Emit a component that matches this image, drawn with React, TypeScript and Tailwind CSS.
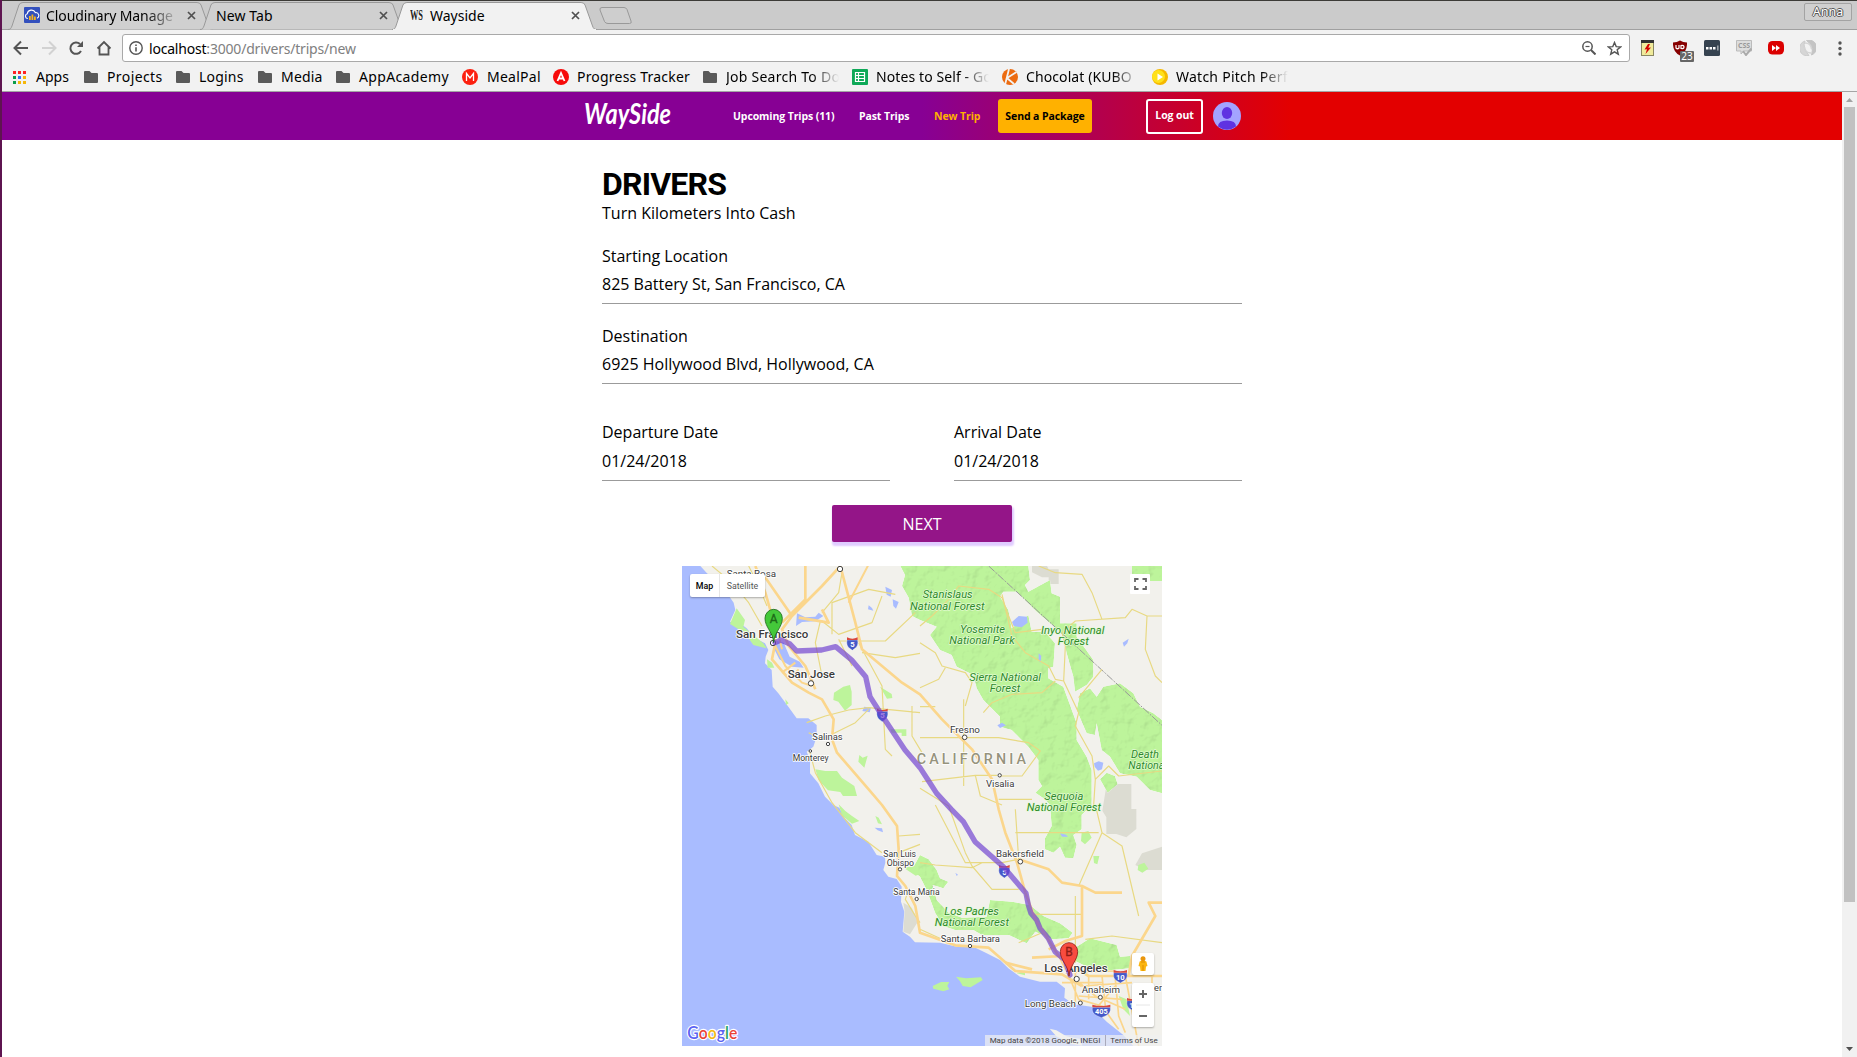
import React from "react";

type Children = { children?: React.ReactNode };

/* ---------- Browser chrome ---------- */

function TabShape({ active }: { active?: boolean }) {
  return (
    <svg className="absolute inset-0 h-full w-full" viewBox="0 0 206 29" preserveAspectRatio="none">
      <path d="M0 28.5 C3 28.5 3 27 4 25 L11 4 Q12 1.5 15 1.5 L190 1.5 Q193 1.5 194 4 L201.500 25 C202.500 27.500 203 28.500 206 28.500" fill={active ? "#f2f2f2" : "#d0d0d0"} stroke="#999" strokeWidth="1" />
      {active && <path d="M1 28.7 H205" stroke="#f2f2f2" strokeWidth="1.4" />}
    </svg>
  );
}

function Tab({ active, wide, children }: Children & { active?: boolean; wide?: boolean }) {
  return (
    <div className={active ? "relative z-10 -mr-[13px] h-[29px] w-[205px] shrink-0" : "relative -mr-[13px] h-[29px] w-[205px] shrink-0"}>
      <TabShape active={active} />
      <div className="relative flex h-full items-center pb-px pl-[16px] pr-[17px]">
        <div className={wide ? "flex min-w-0 flex-1 items-center whitespace-nowrap text-[14px] text-black [mask-image:linear-gradient(to_right,black_76%,transparent_98%)]" : "flex min-w-0 flex-1 items-center whitespace-nowrap text-[14px] text-black"}>
          {children}
        </div>
        <svg className="ml-1 h-[9px] w-[9px] shrink-0" viewBox="0 0 9 9">
          <path d="M1 1 L8 8 M8 1 L1 8" stroke="#505050" strokeWidth="1.7" />
        </svg>
      </div>
    </div>
  );
}

function TabStrip() {
  return (
    <div className="flex h-[30px] border-b border-t border-b-[#a0a0a0] border-t-[#3c3b37] bg-[#cbcbcb] pl-[6px]">
      <Tab wide>
        <svg className="mr-[6px] h-4 w-4 shrink-0" viewBox="0 0 16 16">
          <rect width="16" height="16" rx="1" fill="#3350bd" />
          <path d="M3.800 11.500 H3.500 A2.400 2.400 0 0 1 3.300 6.800 A4.200 4.200 0 0 1 11.300 5.600 A3 3 0 0 1 13 11.300" fill="none" stroke="#fff" strokeWidth="1.100" />
          <path d="M5 9 h1.800 v4 H5z M7.500 7.500 h1.800 V13 H7.500z M10 9.500 h1.800 V13 H10z" fill="#f6b21b" />
        </svg>
        <span className="tracking-[-0.1px]">Cloudinary Manage</span>
      </Tab>
      <Tab>
        <span className="tracking-[0.1px]">New Tab</span>
      </Tab>
      <Tab active>
        <svg className="ml-[2px] mr-[7px] h-[14px] w-[13px] shrink-0" viewBox="0 0 13 14">
          <text x="0" y="12" textLength="13" lengthAdjust="spacingAndGlyphs" fill="#222" className="font-['Liberation_Serif'] text-[14px] font-bold">WS</text>
        </svg>
        <span>Wayside</span>
      </Tab>
      <svg className="ml-[14px] mt-[5px] h-[20px] w-[36px] shrink-0" viewBox="0 0 36 20">
        <path d="M4 1.500 H26 Q28 1.500 29 3.500 L33 15 Q34 17.500 31.500 17.500 H10 Q7.500 17.500 6.500 15.500 L2 4 Q1.500 1.500 4 1.500Z" fill="#cecece" stroke="#999" />
      </svg>
      <div className="ml-auto mr-[5px] mt-[2px] flex h-[18px] w-[48px] items-center justify-center rounded-[2px] border border-[#a3a3a3] bg-[#d0d0d0] text-[12.5px] text-white [text-shadow:1px_0_#555,-1px_0_#555,0_1px_#555,0_-1px_#555]">
        Anna
      </div>
    </div>
  );
}

function Toolbar() {
  return (
    <div className="flex h-[37px] items-center bg-[#f2f2f2] pb-px pl-[9px] pr-[15px]">
      <svg className="h-[18px] w-[108px] shrink-0" viewBox="0 0 108 18" fill="none" stroke="#555" strokeWidth="2">
        <path d="M17 9 H4 M10 2.500 L3.500 9 L10 15.500" />
        <path d="M31 9 H44 M38 2.500 L44.500 9 L38 15.500" stroke="#d2d2d2" />
        <path d="M70 12 A5.700 5.700 0 1 1 69 5" />
        <path d="M72 2 V8 H66z" fill="#555" stroke="none" />
        <path d="M86.500 9.500 L93 3 L99.500 9.500 M88.500 8 V15.500 H97.500 V8" strokeWidth="1.800" />
      </svg>
      <div className="ml-[3px] flex h-[28px] flex-1 items-center rounded-[3px] border border-[#a9a9a9] bg-white pl-[6px] pr-[7px]">
        <svg className="mr-[6px] h-[14px] w-[14px]" viewBox="0 0 14 14" fill="none" stroke="#555" strokeWidth="1.400">
          <circle cx="7" cy="7" r="6.200" />
          <path d="M7 6.200 V10.500 M7 3.500 V5" strokeWidth="1.600" />
        </svg>
        <div className="text-[14px] tracking-[-0.2px] text-black">
          localhost<span className="text-[#808080]">:3000/drivers/trips/new</span>
        </div>
        <svg className="ml-auto h-[14px] w-[14px]" viewBox="0 0 14 14" fill="none" stroke="#555" strokeWidth="1.500">
          <circle cx="5.500" cy="5.500" r="4.700" />
          <path d="M9 9 L13.500 13.500" strokeWidth="2" />
          <path d="M3.500 5.500 H7.500" strokeWidth="1.200" />
        </svg>
        <svg className="ml-[11px] h-[15px] w-[15px]" viewBox="0 0 15 15" fill="none" stroke="#555" strokeWidth="1.400">
          <path d="M7.500 1.500 L9.200 5.600 L13.600 5.900 L10.200 8.800 L11.300 13.200 L7.500 10.800 L3.700 13.200 L4.800 8.800 L1.400 5.900 L5.800 5.600Z" />
        </svg>
      </div>
      <div className="ml-[11px] flex items-center gap-[16px]">
        <svg className="h-4 w-[13px]" viewBox="0 0 13 16">
          <rect x=".5" y=".5" width="12" height="15" fill="#f0eb9b" stroke="#8a8762" />
          <rect width="13" height="3" fill="#333" />
          <path d="M7 4 L3.500 9.500 L6 9.300 L4.500 14 L10 7.500 L7.300 7.800 L9 4Z" fill="#d40000" />
        </svg>
        <div className="relative ml-[3px] h-4 w-[14px]">
          <svg className="h-4 w-[14px]" viewBox="0 0 14 16">
            <path d="M7 .5 Q10 2.500 14 2.500 Q14.500 12 7 15.500 Q-.5 12 0 2.500 Q4 2.500 7 .5Z" fill="#870000" />
            <path d="M3 5 V8 Q4.500 9.500 6 8 V5 M8 9 V5.500 Q11 5 11 7 Q11 9 8 8.500" fill="none" stroke="#fff" strokeWidth="1.200" />
          </svg>
          <div className="absolute left-[7px] top-[11px] flex h-[11px] w-[14px] items-center justify-center rounded-[1px] bg-[#666] text-[10px] text-white">23</div>
        </div>
        <svg className="ml-[1px] h-4 w-4" viewBox="0 0 16 16">
          <rect width="16" height="16" rx="1.500" fill="#364350" />
          <path d="M2 7 h2.500 v2.500 H2z M5.500 7 H8 v2.500 H5.500z M9 7 h2.500 v2.500 H9z M13.500 5.500 h.8 v5 h-.8z" fill="#fff" />
        </svg>
        <div className="relative h-4 w-4">
          <svg className="h-4 w-4" viewBox="0 0 16 16">
            <path d="M.5 .5 H15.500 V11 H8 L5 14 V11 H.5z" fill="#ddd" stroke="#bbb" />
            <path d="M7 11 L10 15 L15.500 8.500" fill="none" stroke="#aaa" strokeWidth="2" />
          </svg>
          <span className="absolute left-[2px] top-0 text-[7px] font-bold leading-[11px] text-[#999]">CSS</span>
        </div>
        <svg className="h-4 w-4" viewBox="0 0 16 16">
          <rect y="1" width="16" height="13.500" rx="4.500" fill="#db0000" />
          <path d="M4 5 L8 8 L4 11z M8 5 L12 8 L8 11z" fill="#fff" />
        </svg>
        <svg className="h-4 w-4" viewBox="0 0 16 16">
          <path d="M9 15.500 A7.500 7.500 0 0 1 5 1 Q2 8 9 15.500Z" fill="#d6d6d6" stroke="#ccc" />
          <path d="M6.500 .5 A7.500 7.500 0 0 1 11.500 15 Q14.500 6 6.500 .5Z" fill="#c4c4c4" stroke="#c4c4c4" />
          <path d="M5 3 Q11 3 11.500 9 M4.500 7 Q5 13 11 13" fill="none" stroke="#d4d4d4" strokeWidth="1.500" />
        </svg>
        <svg className="ml-[6px] h-4 w-[4px]" viewBox="0 0 4 16" fill="#555">
          <circle cx="2" cy="3" r="1.700" />
          <circle cx="2" cy="8.500" r="1.700" />
          <circle cx="2" cy="14" r="1.700" />
        </svg>
      </div>
    </div>
  );
}

function Folder() {
  return (
    <svg className="h-4 w-[14px]" viewBox="0 0 14 16">
      <path d="M0 3 Q0 2 1 2 H5.500 L7.500 4 H13 Q14 4 14 5 V13 Q14 14 13 14 H1 Q0 14 0 13Z" fill="#5a5a5a" />
    </svg>
  );
}

function Bookmark({ icon, width, children }: Children & { icon: React.ReactNode; width: string }) {
  return (
    <div className="mr-[13px] flex shrink-0 items-center gap-[9px]">
      {icon}
      <span className={width}>{children}</span>
    </div>
  );
}

const fade = "[mask-image:linear-gradient(to_right,black_76%,transparent_100%)]";

function BookmarksBar() {
  return (
    <div className="flex h-[25px] items-start overflow-hidden whitespace-nowrap border-b border-[#a5a5a5] bg-[#f2f2f2] pl-[11px] text-[14px] leading-[20px] text-black">
      <Bookmark
        width="w-[35px]"
        icon={
          <svg className="h-[13px] w-[14px]" viewBox="0 0 14 13">
            <path d="M0 0h3v3H0z M5 0h3v3H5z M10 0h3v3h-3z" fill="#f22" />
            <path d="M0 5h3v3H0z M0 10h3v3H0z" fill="#0a9d4a" />
            <path d="M5 5h3v3H5z" fill="#3b6cf0" />
            <path d="M10 5h3v3h-3z M5 10h3v3H5z M10 10h3v3h-3z" fill="#f5b70a" />
          </svg>
        }
      >
        Apps
      </Bookmark>
      <Bookmark icon={<Folder />} width="w-[56px] tracking-[0.4px]">Projects</Bookmark>
      <Bookmark icon={<Folder />} width="w-[46px] tracking-[0.2px]">Logins</Bookmark>
      <Bookmark icon={<Folder />} width="w-[42px] tracking-[0.2px]">Media</Bookmark>
      <Bookmark icon={<Folder />} width="w-[90px] tracking-[0.35px]">AppAcademy</Bookmark>
      <Bookmark
        width="w-[53px] tracking-[0.25px]"
        icon={
          <svg className="h-4 w-4" viewBox="0 0 16 16">
            <circle cx="8" cy="8" r="8" fill="#fc2010" />
            <path d="M4.500 12 V4.500 L8 9 L11.500 4.500 V12" fill="none" stroke="#fff" strokeWidth="1.300" />
          </svg>
        }
      >
        MealPal
      </Bookmark>
      <Bookmark
        width="w-[113px] tracking-[0.2px]"
        icon={
          <svg className="-mr-px h-4 w-4" viewBox="0 0 16 16">
            <circle cx="8" cy="8" r="8" fill="#f70a0a" />
            <path d="M4.500 12 L8 4 L11.500 12 M6 9.500 H10" fill="none" stroke="#fff" strokeWidth="1.800" />
          </svg>
        }
      >
        Progress Tracker
      </Bookmark>
      <Bookmark icon={<Folder />} width={"w-[113px] tracking-[0.25px] " + fade}>Job Search To Do</Bookmark>
      <Bookmark
        width={"w-[113px] tracking-[0.1px] " + fade}
        icon={
          <svg className="-mr-px h-4 w-4" viewBox="0 0 16 16">
            <rect width="16" height="16" rx="1" fill="#0fa958" />
            <path d="M3.500 3.500 h9 v9 h-9z M3.500 6.500 h9 M3.500 9.500 h9 M6.500 3.500 v9" fill="none" stroke="#fff" strokeWidth="1.200" />
          </svg>
        }
      >
        Notes to Self - Go
      </Bookmark>
      <Bookmark
        width={"w-[113px] tracking-[0.1px] " + fade}
        icon={
          <svg className="-mr-px h-4 w-4" viewBox="0 0 16 16">
            <circle cx="8" cy="8" r="8" fill="#ec6b10" />
            <path d="M7 0 L3 16 M14.500 3 L5 9 L12 15" fill="none" stroke="#f2f2f2" strokeWidth="1.800" />
          </svg>
        }
      >
        Chocolat (KUBO
      </Bookmark>
      <Bookmark
        width={"w-[112px] tracking-[0.25px] " + fade}
        icon={
          <svg className="-mr-px h-4 w-4" viewBox="0 0 16 16">
            <circle cx="8" cy="8" r="8" fill="#f5b800" />
            <circle cx="6.500" cy="7.500" r="6.500" fill="#ffe11a" />
            <path d="M5.500 4.500 L11 8 L5.500 11.500z" fill="#fff" />
          </svg>
        }
      >
        Watch Pitch Perf
      </Bookmark>
    </div>
  );
}

/* ---------- Site header ---------- */

function NavBar() {
  return (
    <header className="flex h-[48px] items-center bg-[linear-gradient(to_right,#870094_50%,#e30000_70%)] pl-[581px] text-[10.5px] font-bold tracking-[-0.1px] text-white">
      <svg className="h-[40px] w-[92px] shrink-0" viewBox="0 0 92 40">
        <text x="1" y="28" textLength="87" lengthAdjust="spacingAndGlyphs" fill="#fff" className="font-['Lato'] text-[28px] font-bold italic tracking-normal">WaySide</text>
      </svg>
      <a className="ml-[58px] w-[126px] shrink-0 pt-[2px]">Upcoming Trips (11)</a>
      <a className="w-[75px] shrink-0 pt-[2px]">Past Trips</a>
      <a className="w-[64px] shrink-0 pt-[2px] text-[#ffb100]">New Trip</a>
      <a className="flex h-[34px] w-[94px] shrink-0 items-center justify-center rounded-[3px] bg-[#ffb100] pt-px text-black">Send a Package</a>
      <a className="ml-[54px] flex h-[35px] w-[57px] shrink-0 items-center justify-center rounded-[3px] border-2 border-white pb-[1px]">Log out</a>
      <svg className="ml-[10px] h-[28px] w-[28px] shrink-0" viewBox="0 0 28 28">
        <circle cx="14" cy="14" r="14" fill="#a3a3ff" />
        <ellipse cx="14" cy="11" rx="5.200" ry="6" fill="#5f33e1" />
        <path d="M5 24.500 Q5 18.500 14 18.500 Q23 18.500 23 24.500 Q14 31 5 24.500Z" fill="#5f33e1" />
      </svg>
    </header>
  );
}

/* ---------- Trip form ---------- */

function Field({ label, value, tall }: { label: string; value: string; tall?: boolean }) {
  return (
    <div className={tall ? "flex h-[61px] flex-1 flex-col gap-[5px] border-b border-[#9b9b9b]" : "flex h-[60px] flex-col gap-1 border-b border-[#9b9b9b]"}>
      <label>{label}</label>
      <div>{value}</div>
    </div>
  );
}

/* ---------- Map ---------- */

const park = "#bdf49b";

function Label({ x, y, w, size = 28, kind = "town", children }: { x: number; y: number; w: number; size?: number; kind?: "town" | "city" | "park"; children: string }) {
  return (
    <text
      x={x}
      y={y}
      textLength={w}
      fontSize={size}
      lengthAdjust="spacingAndGlyphs"
      fill={kind === "park" ? "#2f8a2a" : "#3a3a3a"}
      stroke={kind === "park" ? "#e4fbd6" : "#fff"}
      strokeWidth={kind === "park" ? 4 : 5}
      paintOrder="stroke"
      strokeLinejoin="round"
      fontStyle={kind === "park" ? "italic" : "normal"}
      fontWeight={kind === "city" ? 500 : 400}
      fontFamily="Roboto, sans-serif"
    >
      {children}
    </text>
  );
}

function Dot({ x, y, r = 7 }: { x: number; y: number; r?: number }) {
  return <circle cx={x} cy={y} r={r} fill="#fff" stroke="#444" strokeWidth="3" />;
}

function Shield({ x, y, n, wide }: { x: number; y: number; n: string; wide?: boolean }) {
  const w = wide ? 27 : n.length > 1 ? 20 : 16;
  return (
    <g transform={`translate(${x} ${y})`}>
      <path d={`M${-w} -10 Q${-w - 3} 8 ${-w / 2} 15 L0 21 L${w / 2} 15 Q${w + 3} 8 ${w} -10Z`} fill="#4559c9" stroke="#fff" strokeWidth="1" />
      <path d={`M${-w} -18 Q0 -10 ${w} -18 V-10 H${-w}Z`} fill="#d8483f" />
      <text y="11" textAnchor="middle" fontSize={wide ? 22 : 23} fontWeight="700" fill="#fff" fontFamily="Roboto, sans-serif">{n}</text>
    </g>
  );
}

function Pin({ x, y, letter, fill, edge }: { x: number; y: number; letter: string; fill: string; edge: string }) {
  return (
    <g transform={`translate(${x} ${y})`}>
      <path d="M0 0 C-2 -32 -26 -46 -26 -73 A26 27 0 0 1 26 -73 C26 -46 2 -32 0 0Z" fill={fill} stroke={edge} strokeWidth="2.500" />
      <text y="-60" textAnchor="middle" fontSize="36" fill={edge} stroke={edge} fontFamily="Roboto, sans-serif">{letter}</text>
    </g>
  );
}

function MapDrawing() {
  return (
    <svg className="block h-[480px] w-[480px]" viewBox="0 0 1440 1440">
      <defs>
        <filter id="relief" x="0" y="0" width="100%" height="100%" colorInterpolationFilters="sRGB">
          <feTurbulence type="fractalNoise" baseFrequency="0.03" numOctaves="3" seed="4" result="n" />
          <feDiffuseLighting in="n" surfaceScale="3.5" lightingColor="#fff" result="l">
            <feDistantLight azimuth="225" elevation="62" />
          </feDiffuseLighting>
          <feColorMatrix in="l" type="matrix" values="0.5 0 0 0 0.56 0 0.5 0 0 0.56 0 0 0.5 0 0.56 0 0 0 1 0" result="c" />
          <feBlend in="SourceGraphic" in2="c" mode="multiply" result="b" />
          <feComposite in="b" in2="SourceGraphic" operator="in" />
        </filter>
      </defs>
      <rect width="1440" height="1440" fill="#a9bcff" />
      {/* coastline */}
      <path
        fill="#f2f1ec"
        d="M55 0 L75 22 L125 67 L155 110 L160 132 L144 167 L174 172 L194 187 L219 217 L249 232 L259 252 L251 272 L249 292 L269 312 L272 362 L289 382 L319 422 L344 457 L379 457 L404 477 L404 512 L394 542 L374 557 L384 582 L384 622 L409 652 L429 692 L454 717 L472 725 L489 757 L509 777 L519 807 L559 827 L584 867 L609 872 L610 890 L604 912 L619 932 L644 939 L659 962 L657 1007 L667 1037 L662 1097 L684 1112 L699 1129 L774 1130 L824 1142 L874 1142 L914 1162 L954 1182 L979 1207 L1014 1232 L1074 1247 L1124 1247 L1149 1267 L1147 1295 L1174 1315 L1229 1322 L1274 1367 L1324 1407 L1354 1440 H1440 V0Z"
      />
      {/* deserts and bases */}
      <g fill="#dcdcd2">
        <path d="M1050 0 h45 l5 10 h30 v44 h-30 v-20 h-20 l-30 -15z" />
        <path d="M1274 654 h74 v75 h15 v60 l-30 25 l-30 -10 h-30 v-50 l-12 -20z" />
        <path d="M1380 862 l60 -20 v70 h-50 l-30 -15z" />
        <path d="M664 1010 l25 15 l20 40 l-25 40 l-20 -8 l4 -60z" />
      </g>
      {/* parks and forests */}
      <g fill={park} filter="url(#relief)">
        <path d="M655 0 L669 27 L660 60 L680 95 L690 150 L714 162 L764 182 L744 207 L774 252 L809 267 L824 302 L874 327 L884 367 L904 402 L954 452 L954 482 L989 492 L1039 542 L1069 582 L1069 642 L1080 660 L1060 680 L1089 700 L1104 717 L1109 780 L1089 817 L1089 850 L1114 860 L1134 842 L1149 875 L1174 877 L1184 837 L1174 807 L1199 790 L1199 747 L1229 717 L1229 612 L1214 572 L1184 522 L1184 472 L1144 362 L1099 337 L1099 307 L1114 302 L1119 232 L1089 197 L1049 197 L1039 147 L989 187 L979 132 L954 92 L964 77 L1004 77 L1064 137 L1134 197 L1144 212 L1154 262 L1174 332 L1179 377 L1214 357 L1234 332 L1234 282 L1184 212 L1184 172 L1134 172 L1134 92 L1109 82 L1104 42 L1039 77 L1029 57 L1044 42 L1039 0Z" />
        <path d="M1194 382 L1224 367 L1244 392 L1264 362 L1314 352 L1354 382 L1374 422 L1414 442 L1440 462 V682 L1404 672 L1364 632 L1314 622 L1284 572 L1259 552 L1244 472 L1239 507 L1214 502 L1184 432Z" />
        <path d="M1254 640 l20 -20 l25 10 l8 25 l-30 25z M1350 0 h90 v45 h-40 v-20 h-50z" />
        <path d="M800 1040 L840 1055 L914 1052 L924 1002 L990 1007 L1044 1017 L1084 1050 L1134 1072 L1172 1100 L1160 1117 L1110 1120 L1060 1097 L1034 1132 L980 1107 L900 1107 L874 1092 L819 1092 L784 1080 L760 1042 L734 972 L714 932 L689 912 L714 867 L740 880 L764 912 L774 937 L799 947 L784 967 L752 957 L764 1002Z" />
        <path d="M1184 1142 L1224 1117 L1304 1137 L1314 1172 L1344 1170 L1344 1207 L1289 1212 L1249 1217 L1204 1197 L1159 1175Z" />
      </g>
      <g fill={park}>
        <path d="M164 127 l25 35 l-5 20 l60 50 l10 15 l-40 -10 l-25 -35 l-45 -28z M255 280 l15 10 l7 15 l-20 0z" />
        <path d="M484 362 l20 -5 l5 20 l0 40 l-20 17 l-20 -27 l-15 -5 l2 -22z M594 362 l35 22 l2 12 l-16 2z M625 490 h48 v20 h-14 v-10 h-30z M532 567 l10 8 l15 -6 l-10 36 l-18 -18z M310 400 l10 12 l-8 5z" />
        <path d="M400 610 l30 5 l35 0 l15 20 l37 25 l8 30 l-42 0 l-8 -12 l-37 -5 l-28 -30z" />
        <path d="M470 715 l20 20 l20 15 l22 15 l-22 8 l-30 -25z M580 750 l10 5 l10 20 l-12 -3z" />
        <path d="M665 905 l30 -4 l8 12 l20 8 l-22 8z M1199 800 l20 -5 l10 20 l-20 20 l-12 -10z M1369 897 l18 -7 l12 18 l-18 12 l-14 -8z M1234 870 l18 0 l-6 25 l-10 -4z M1004 1222 l25 -8 v14z M1310 1290 l24 10 l10 50 l-20 -20z" />
        <path d="M752 1260 l25 -12 l25 0 l-6 12 l6 10 l-18 6 l-30 -8z M822 1232 l30 5 l45 -3 l5 8 l-36 22 l-24 -4 l-8 -14z" />
      </g>
      {/* water */}
      <g fill="#a9bcff">
        <path d="M275 222 l30 8 l18 42 l30 15 l12 18 l-35 -3 l-38 -22 l-15 -30z M345 142 l25 12 l30 -2 l10 -12 l14 10 l-24 16 l-40 2 l-18 12z M560 118 l10 8 l4 8 l-16 -4z M610 62 l20 10 l-4 20 l-12 -6z M632 100 l18 8 l-8 20 l-8 -8z M547 422 l20 3 l-4 14 l-22 -4z" />
        <path d="M990 168 l20 -18 l25 2 l2 18 l-18 14 l-24 -4z M1322 230 l18 -12 l-4 14 l-10 10z M1070 262 l8 8 l-2 20 l-6 -6z M1236 592 l14 -6 l14 4 l-4 20 l-12 4 l-10 -12z M946 478 l14 -8 l12 8 l-18 8z" />
        <path d="M578 785 l22 2 l3 12 l-16 -6z M1134 802 l18 4 l6 6 l-18 0z M820 920 l8 6 l-4 4z" />
      </g>
      <path d="M1103 1388 l20 5 l30 18 l40 8 l8 20 l-34 -6 l-44 -22z" fill="#f2f1ec" />
      {/* state line */}
      <path d="M920 0 L1440 478" stroke="#999" strokeWidth="3" strokeDasharray="24 4 5 4" fill="none" />
      {/* local roads */}
      <g fill="none" stroke="#e8d982" strokeWidth="3.500" strokeLinejoin="round">
        <path d="M90 0 L150 50 L200 110 L240 180 M200 0 L230 60 L255 120 M370 160 L420 165 L470 205 L570 170 L600 90 M450 205 L450 110 L560 70 L640 85 M420 140 L470 80 L480 20 M470 220 L510 300 M470 225 L610 225 L700 140 M530 230 L600 360 L610 550 L630 570 M540 260 L640 275 L714 262" />
        <path d="M374 470 L430 450 L500 432 L560 425 L714 440 M380 500 L420 520 L520 470 L560 430 M384 560 L400 620 L450 710 L520 800 L600 860 M690 420 L690 510 L720 560 M415 165 L400 230 L420 330" />
        <path d="M714 422 H760 M714 515 H950 L1040 530 L1075 555 L1020 630 H950 M845 400 V660 M714 230 L760 260 L780 300 L850 320 L870 350 L850 420 M714 180 L750 150 L800 100 L830 60 L920 70 L960 95 L980 150 L1000 200 L1080 190 M714 365 L770 340 L790 305 M720 647 L880 628 H945 M880 628 L895 690 L960 717 M950 700 H1050" />
        <path d="M960 85 L990 210 L1030 260 L1100 300 L1120 340 L1145 345 L1150 240 L1140 200 L1180 165 L1330 155 L1350 130 L1395 150 H1440 M1260 160 L1230 80 L1200 25 L1120 20 L1070 0 M1395 150 L1390 250 L1420 330 L1440 350 M1145 345 L1190 440 L1180 480 L1230 570 L1240 640 L1235 717 M1190 395 L1260 310 M1240 640 L1280 600 L1310 630 L1440 615 M904 440 L930 410 L990 385 L1080 380 L1120 345" />
        <path d="M714 667 L800 720 L850 860 L870 900 L930 970 H1010 M760 717 L850 890 L960 890 L1010 880 M714 890 L760 897 L870 905 L900 890 M1010 880 L1000 730 M650 810 L714 805 M650 860 L714 835 M1180 990 V1190 M1240 717 L1260 800 L1320 840 L1370 1050 M1260 800 L1190 960 M1060 1045 H1200 M1000 800 L1250 800 M1210 1120 L1290 1110 L1440 1130 M1010 1130 L1080 1100 M680 970 L670 1000 L700 1050 L714 1070 M714 1090 L780 1120" />
      </g>
      {/* highways */}
      <g fill="none" stroke="#fbd68c" strokeWidth="8" strokeLinejoin="round">
        <path d="M220 0 L250 80 L270 150 L280 230 L270 280 L330 350 L380 380 L420 400 L455 460 L450 520 L465 560 L560 670 L600 717 L645 780 L650 850 L645 930 L670 960 L700 1020 L714 1100 L820 1138 L920 1145 L1000 1215 L1140 1225 L1200 1260" />
        <path d="M240 20 L330 150 L420 60 L475 0 M330 150 L300 190 L320 240 L370 300 L400 370 M350 155 L440 170 L420 130 M475 0 L520 170 L540 250 L600 300 L660 350 L714 385 L780 460 L870 550 L930 640 L950 730 L970 800 L1005 890 L1030 980 M370 0 V100 L300 170" />
        <path d="M1010 880 L1100 910 L1140 950 L1200 960 L1240 980 H1320 M1200 960 V1110 L1150 1125 L1100 1150 M1440 1010 L1400 1010 L1420 1050 L1350 1170 L1340 1230 M1050 1175 L1140 1170 L1170 1200 L1220 1230 L1440 1230 M970 1190 L1050 1210 M1030 980 L1060 1060 L1130 1170" />
        <path d="M280 240 L310 300 L360 350 L390 360 M290 210 L300 250 M340 290 L300 320 M350 310 L320 340 M560 -5 L500 110" strokeWidth="6" />
        <path d="M1130 1170 L1165 1240 L1190 1300 L1260 1320 L1310 1390 M1180 1200 V1310 M1180 1240 L1240 1290 L1330 1330 M1220 1230 L1220 1300 M1200 1260 L1350 1250 M1260 1230 L1270 1320 M1300 1240 L1310 1350 L1330 1400 M1190 1290 L1320 1300 M1150 1220 L1300 1215 M1240 1330 L1300 1260 M1330 1230 L1370 1440 M1140 1250 H1260 M1410 1220 V1300" strokeWidth="5" />
      </g>
      <g>
        <Label x={134} y={32} w={148} size={27}>Santa Rosa</Label>
        <Label x={162} y={216} w={217} size={33} kind="city">San Francisco</Label>
        <Label x={317} y={336} w={142} size={33} kind="city">San Jose</Label>
        <Label x={391} y={522} w={91}>Salinas</Label>
        <Label x={332} y={584} w={108} size={26}>Monterey</Label>
        <Label x={722} y={97} w={150} size={31} kind="park">Stanislaus</Label>
        <Label x={684} y={131} w={224} size={31} kind="park">National Forest</Label>
        <Label x={834} y={200} w={135} size={31} kind="park">Yosemite</Label>
        <Label x={802} y={233} w={196} size={31} kind="park">National Park</Label>
        <Label x={1077} y={205} w={190} size={31} kind="park">Inyo National</Label>
        <Label x={1127} y={237} w={94} size={31} kind="park">Forest</Label>
        <Label x={862} y={344} w={215} size={31} kind="park">Sierra National</Label>
        <Label x={923} y={377} w={92} size={31} kind="park">Forest</Label>
        <Label x={804} y={500} w={90}>Fresno</Label>
        <Label x={912} y={662} w={85}>Visalia</Label>
        <Label x={1087} y={702} w={117} size={31} kind="park">Sequoia</Label>
        <Label x={1034} y={735} w={223} size={31} kind="park">National Forest</Label>
        <Label x={1347} y={576} w={84} size={31} kind="park">Death</Label>
        <Label x={1339} y={610} w={108} size={31} kind="park">Nationa</Label>
        <Label x={942} y={872} w={144}>Bakersfield</Label>
        <Label x={604} y={872} w={98} size={27}>San Luis</Label>
        <Label x={614} y={899} w={82} size={27}>Obispo</Label>
        <Label x={634} y={987} w={139} size={27}>Santa Maria</Label>
        <Label x={787} y={1048} w={164} size={31} kind="park">Los Padres</Label>
        <Label x={758} y={1081} w={223} size={31} kind="park">National Forest</Label>
        <Label x={776} y={1127} w={178}>Santa Barbara</Label>
        <Label x={1087} y={1219} w={190} size={34} kind="city">Los Angeles</Label>
        <Label x={1199} y={1281} w={115} size={29}>Anaheim</Label>
        <Label x={1028} y={1322} w={154} size={29}>Long Beach</Label>
        <Label x={1416} y={1274} w={24} size={28}>er</Label>
        <text x="704" y="595" textLength="328" fontSize="43" fontWeight="500" fill="#96937c" stroke="#fff" strokeWidth="4" paintOrder="stroke" fontFamily="Roboto, sans-serif">CALIFORNIA</text>
        <Dot x={273} y={231} r={8} />
        <Dot x={387} y={352} r={8} />
        <Dot x={474} y={9} r={8} />
        <Dot x={438} y={534} r={5} />
        <Dot x={385} y={555} r={4} />
        <Dot x={848} y={514} />
        <Dot x={953} y={628} r={5} />
        <Dot x={1015} y={887} />
        <Dot x={654} y={910} r={5} />
        <Dot x={704} y={999} r={5} />
        <Dot x={864} y={1140} r={5} />
        <Dot x={1184} y={1239} r={8} />
        <Dot x={1255} y={1294} r={6} />
        <Dot x={1195} y={1311} r={6} />
        <Shield x={511} y={232} n="5" />
        <Shield x={601} y={446} n="5" />
        <Shield x={967} y={915} n="5" />
        <Shield x={1315} y={1230} n="10" />
        <Shield x={1355} y={1314} n="15" />
        <Shield x={1258} y={1334} n="405" wide />
      </g>
      {/* driving route */}
      <path
        d="M279 230 L297 222 L324 234 L344 255 L419 252 L461 242 L509 282 L551 332 L564 392 L599 447 L629 492 L669 552 L714 605 L740 645 L764 682 L808 730 L844 767 L879 827 L964 902 L1032 982 L1039 1017 L1047 1042 L1064 1062 L1074 1087 L1099 1117 L1119 1157 L1149 1182 L1164 1227"
        fill="none"
        stroke="#6f3fd0"
        strokeOpacity=".68"
        strokeWidth="16"
        strokeLinejoin="round"
        strokeLinecap="round"
      />
      <Pin x={275} y={230} letter="A" fill="#44c93a" edge="#1d6a18" />
      <Pin x={1161} y={1230} letter="B" fill="#f84c40" edge="#8e1d16" />
      <text x="16" y="1419" textLength="150" lengthAdjust="spacingAndGlyphs" fontSize="50" fontWeight="600" stroke="#fff" strokeWidth="7" paintOrder="stroke" strokeLinejoin="round" fontFamily="Lato, sans-serif">
        <tspan fill="#5b62f2">G</tspan>
        <tspan fill="#ea4335">o</tspan>
        <tspan fill="#f5b915">o</tspan>
        <tspan fill="#5b62f2">g</tspan>
        <tspan fill="#1fa463">l</tspan>
        <tspan fill="#ea4335">e</tspan>
      </text>
    </svg>
  );
}

function TripMap() {
  return (
    <div className="relative mx-auto mt-6 h-[480px] w-[480px] overflow-hidden font-['Roboto'] leading-none">
      <MapDrawing />
      <div className="absolute left-[8px] top-[8px] flex h-[23px] w-[75px] rounded-[2px] bg-white text-[8.8px] shadow-[0_1px_2px_rgba(0,0,0,0.3)]">
        <div className="flex w-[30px] items-center justify-center border-r border-[#e6e6e6] pt-px font-medium text-black">Map</div>
        <div className="flex flex-1 items-center justify-center pt-px text-[#565656]">Satellite</div>
      </div>
      <div className="absolute left-[448px] top-[8px] flex h-[20px] w-[20px] items-center justify-center rounded-[1px] bg-white">
        <svg className="h-[12px] w-[13px]" viewBox="0 0 13 12" fill="none" stroke="#666" strokeWidth="1.800">
          <path d="M1 4 V1 H4.500 M8.500 1 H12 V4 M12 8 V11 H8.500 M4.500 11 H1 V8" />
        </svg>
      </div>
      <div className="absolute left-[450px] top-[387px] flex h-[22px] w-[22px] items-center justify-center rounded-[2px] bg-white shadow-[0_1px_2px_rgba(0,0,0,0.3)]">
        <svg className="h-[16px] w-[10px]" viewBox="0 0 10 16">
          <path d="M1.500 6 Q1.500 5 3 5 H7 Q8.500 5 8.500 6 L9.500 10 L8 10.500 L7.500 15 H2.500 L2 10.500 L.5 10Z" fill="#fbb510" />
          <circle cx="5" cy="2.800" r="2.500" fill="#e9960c" />
          <path d="M5 9 V15 M3 6 L7 6" stroke="#d98500" strokeWidth=".8" />
        </svg>
      </div>
      <div className="absolute left-[450px] top-[417px] flex h-[44px] w-[22px] items-center justify-center rounded-[2px] bg-white shadow-[0_1px_2px_rgba(0,0,0,0.3)]">
        <svg className="h-[44px] w-[22px]" viewBox="0 0 22 44" stroke="#666" strokeWidth="2">
          <path d="M7 11 H15 M11 7 V15 M7 33 H15" />
          <path d="M4 22 H18" stroke="#e6e6e6" strokeWidth="1" />
        </svg>
      </div>
      <div className="absolute bottom-0 right-0 flex h-[11px] w-[177px] items-center whitespace-nowrap bg-[#f1f1f1]/70 text-[8px] text-[#444]">
        <div className="flex h-full w-[121px] items-center justify-center border-r border-[#aab]">Map data ©2018 Google, INEGI</div>
        <div className="flex-1 text-center">Terms of Use</div>
      </div>
    </div>
  );
}

function Scrollbar() {
  return (
    <div className="flex w-[15px] shrink-0 flex-col items-center bg-[#f1f1f1]">
      <svg className="h-[15px] w-[15px] shrink-0" viewBox="0 0 15 15">
        <path d="M4 10 L7.500 6 L11 10z" fill="#a3a3a3" />
      </svg>
      <div className="h-[795px] w-[11px] shrink-0 bg-[#c1c1c1]" />
      <svg className="mt-auto h-[15px] w-[15px] shrink-0" viewBox="0 0 15 15">
        <path d="M4 5 L7.500 9 L11 5z" fill="#505050" />
      </svg>
    </div>
  );
}

export default function App() {
  return (
    <div className="flex h-[1057px] w-[1857px] overflow-hidden bg-white font-['Open_Sans',sans-serif]">
      <div className="w-[2px] shrink-0 bg-[#5e1450]" />
      <div className="flex min-w-0 flex-1 flex-col">
        <div className="font-['Noto_Sans',sans-serif]">
          <TabStrip />
          <Toolbar />
          <BookmarksBar />
        </div>
        <div className="flex min-h-0 flex-1">
          <div className="min-w-0 flex-1 overflow-hidden bg-white">
            <NavBar />
            <main className="mx-auto w-[640px] pt-[26px] text-[16px] leading-[24px] text-black">
              <h1 className="h-[35px] font-['Roboto'] text-[32px] font-bold leading-[36px] tracking-[-0.8px]">DRIVERS</h1>
              <p>Turn Kilometers Into Cash</p>
              <form>
                <div className="mt-[19px] flex flex-col gap-5">
                  <Field label="Starting Location" value="825 Battery St, San Francisco, CA" />
                  <Field label="Destination" value="6925 Hollywood Blvd, Hollywood, CA" />
                </div>
                <div className="mt-9 flex gap-16">
                  <Field tall label="Departure Date" value="01/24/2018" />
                  <Field tall label="Arrival Date" value="01/24/2018" />
                </div>
                <button type="button" className="mx-auto mt-6 flex h-[37px] w-[180px] items-center justify-center rounded-[2px] bg-[#941588] text-white shadow-[1px_3px_2px_1px_#e0ccff]">
                  NEXT
                </button>
              </form>
              <TripMap />
            </main>
          </div>
          <Scrollbar />
        </div>
      </div>
    </div>
  );
}
